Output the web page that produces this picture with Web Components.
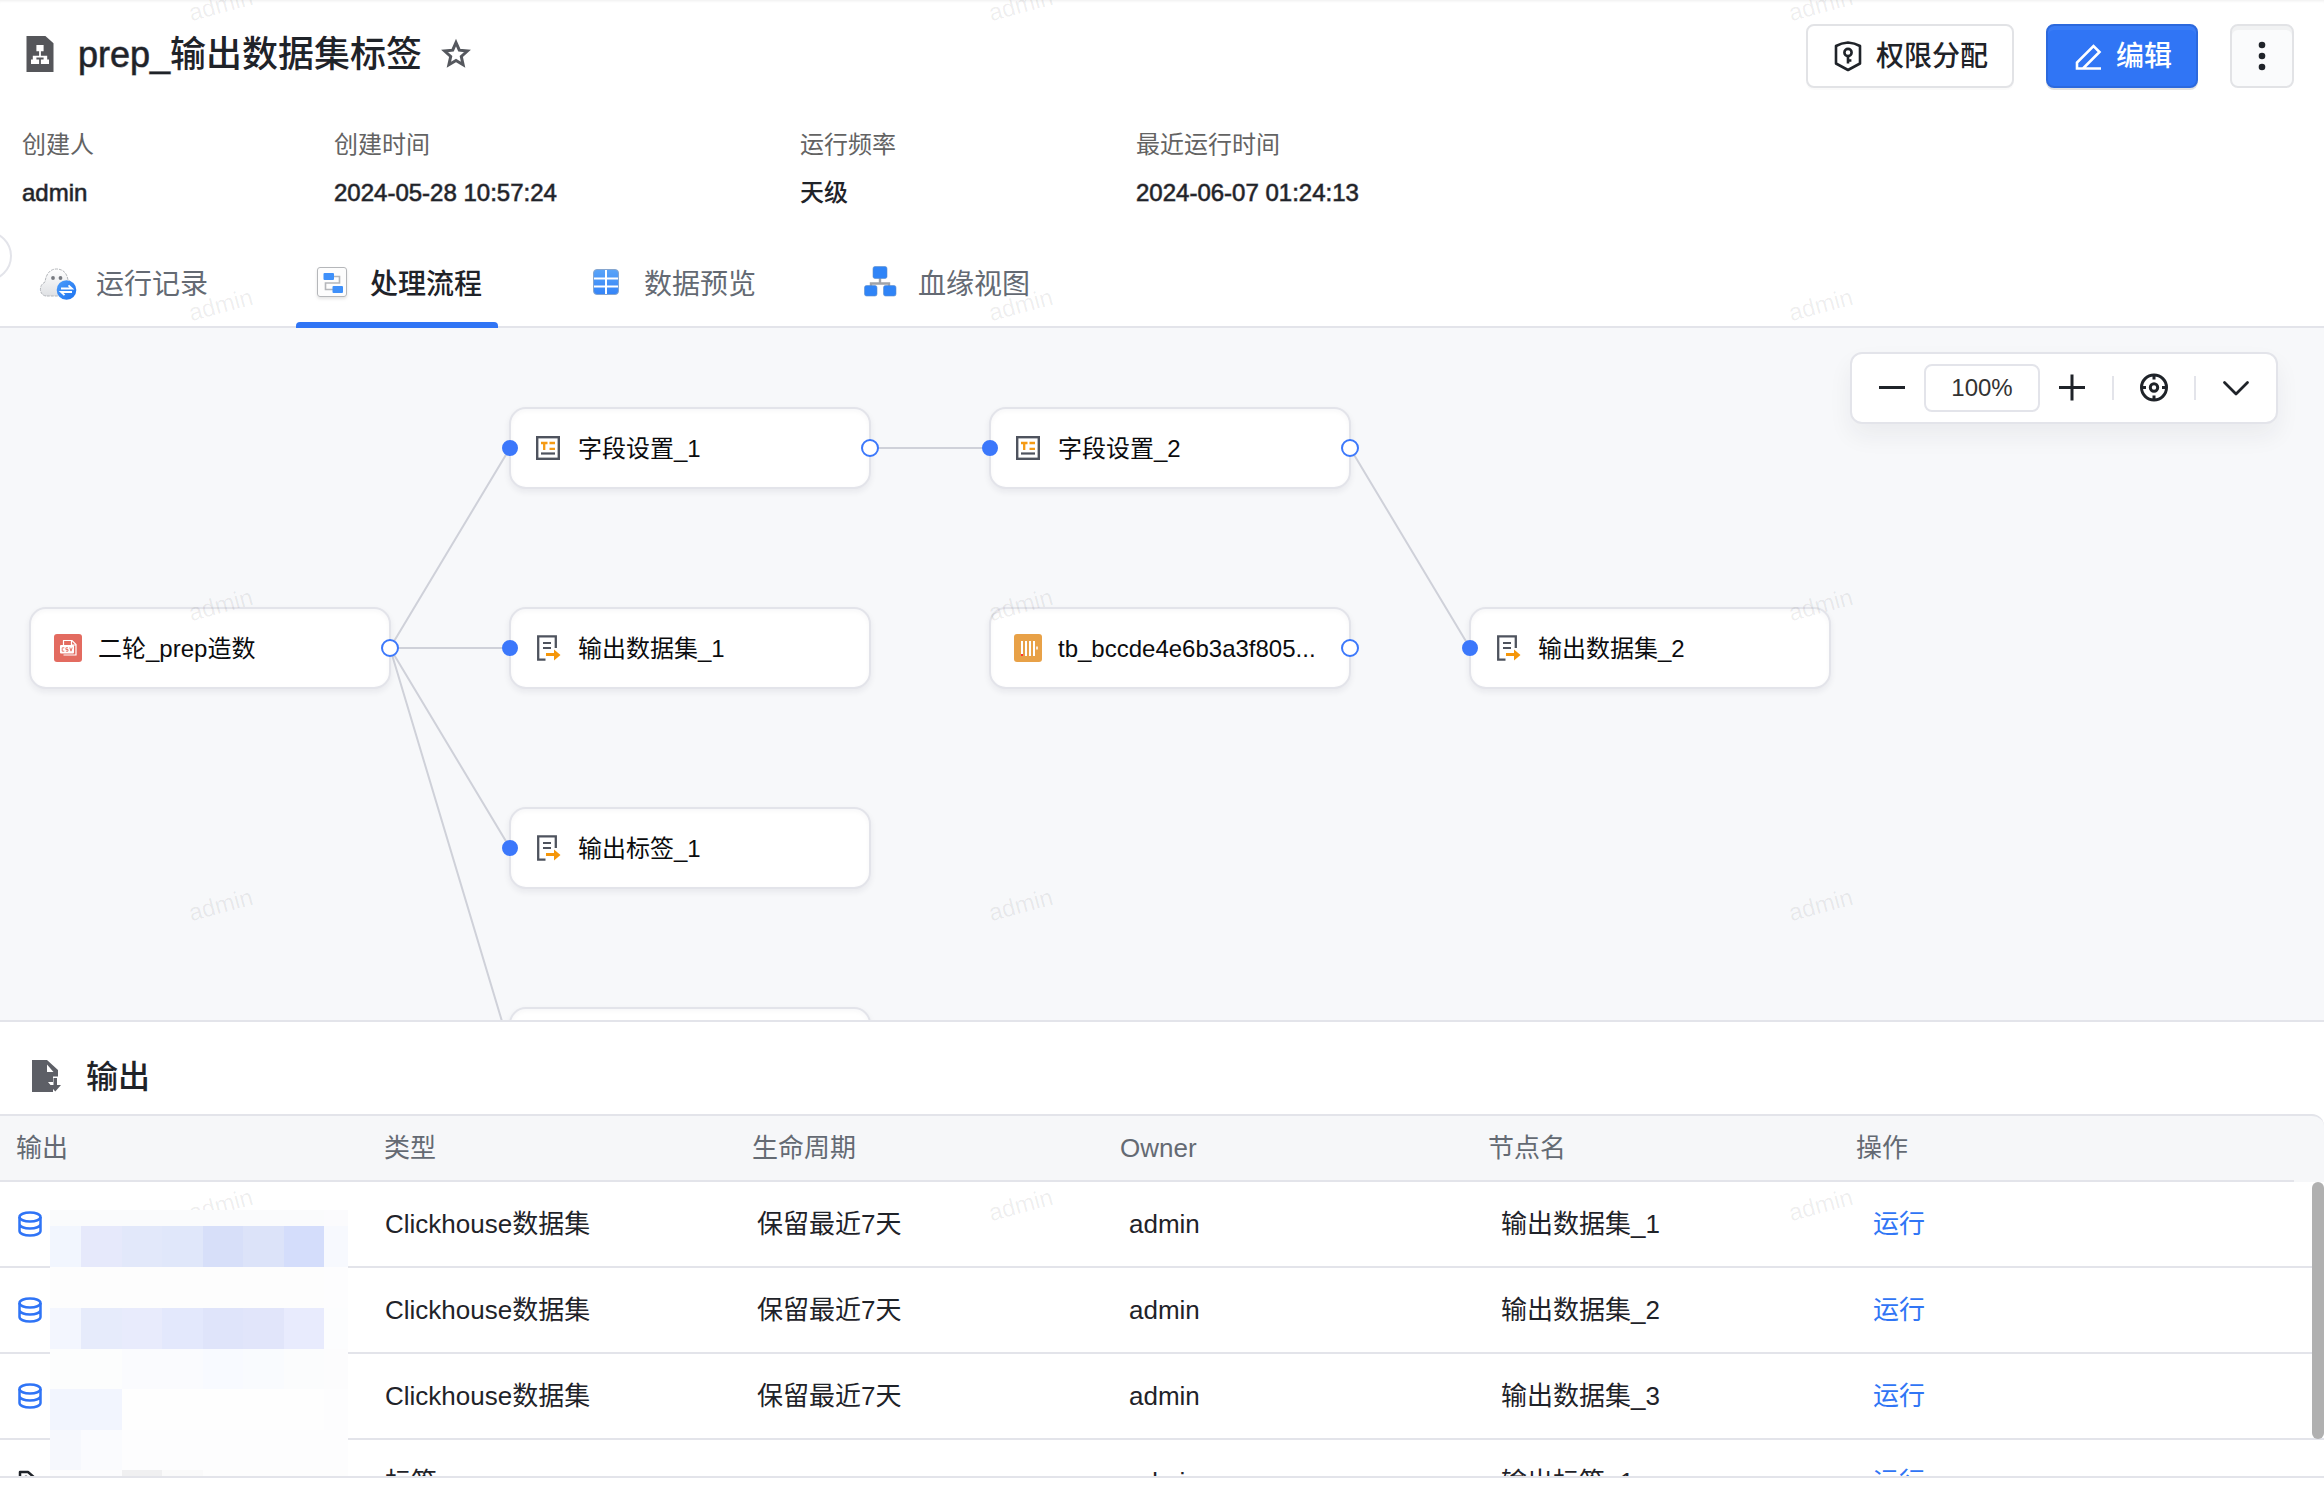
<!DOCTYPE html>
<html lang="zh-CN">
<head>
<meta charset="utf-8">
<title>prep_输出数据集标签</title>
<style>
  html, body { margin: 0; height: 100%; }
  body {
    --ink: #1f2329; --muted: #646a73; --line: #e3e4ea; --blue: #3075f5;
    --port: #3c78fb; --canvas: #f7f8fa; --medium: 1px rgba(31,35,41,.6);
    background: #fff; color: var(--ink);
    font-family: "Liberation Sans", "Noto Sans CJK SC", sans-serif;
    overflow: hidden;
  }
</style>
</head>
<body>
<prep-page></prep-page>

<script>
const define = (name, html, setup) => {
  const tpl = document.createElement('template');
  tpl.innerHTML = html;
  customElements.define(name, class extends HTMLElement {
    connectedCallback() {
      if (this.shadowRoot) return;
      this.attachShadow({ mode: 'open' }).append(tpl.content.cloneNode(true));
      if (setup) setup(this, this.shadowRoot);
    }
  });
};

const ICONS = {
  flowfile: ['0 0 32 40', `<path d="M1 0H22L31 8V40H1Z" fill="#55565a"/><path d="M12 10h8v7h-3v5h7v4h2v5h-9v-5h3v-2h-8v2h3v5H6v-5h2v-4h7v-5h-3z" fill="#fff"/>`],
  star: ['0 0 28 28', `<path d="M14 2.6l3.3 7.6 8.1.8-6.100 5.500 1.800 8.200-7.100-4.300-7.100 4.300 1.800-8.200L2.600 11l8.100-.8z" fill="none" stroke="#55585e" stroke-width="3" stroke-linejoin="miter"/>`],
  shield: ['0 0 32 32', `<path d="M16 2.500c4 .3 8.500 1.500 12 3.500v17.500L16 30 4 23.500V6c3.500-2 8-3.200 12-3.500z" fill="none" stroke="#1f2329" stroke-width="2.600" stroke-linejoin="round"/><circle cx="16" cy="12.500" r="3.600" fill="none" stroke="#1f2329" stroke-width="2.600"/><path d="M16 16v7.500M16 20.500h3.400" stroke="#1f2329" stroke-width="2.600" fill="none"/>`],
  pen: ['0 0 32 32', `<path d="M5 28.500V22.500L21.500 6l6 6L11 28.500M3.700 28.500H29" fill="none" stroke="#fff" stroke-width="2.600"/>`],
  more: ['0 0 32 32', `<g fill="#1f2329"><circle cx="16" cy="5" r="3.300"/><circle cx="16" cy="16" r="3.300"/><circle cx="16" cy="27" r="3.300"/></g>`],
  minus: ['0 0 32 32', `<path d="M3 15.500h26" stroke="#1f2329" stroke-width="3"/>`],
  plus: ['0 0 32 32', `<path d="M3 15.500h26M16 2.500v26" stroke="#1f2329" stroke-width="3"/>`],
  target: ['0 0 32 32', `<g fill="none" stroke="#1f2329" stroke-width="3"><circle cx="16" cy="15.500" r="12.500"/><circle cx="16" cy="15.500" r="3.700"/><path d="M16 3v4.500M16 23.500V28M3.500 15.500H8M24 15.500h4.500"/></g>`],
  chevron: ['0 0 32 32', `<path d="M4.500 10.500L16 22 27.500 10.500" fill="none" stroke="#1f2329" stroke-width="2.800" stroke-linecap="round" stroke-linejoin="round"/>`],
  ghost: ['0 0 40 40', `<defs><linearGradient id="g" x1="0" y1="0" x2="0" y2="1"><stop offset="0" stop-color="#fff"/><stop offset="1" stop-color="#dfe1e4"/></linearGradient><linearGradient id="b" x1="0" y1="0" x2="1" y2="1"><stop offset="0" stop-color="#4c9dfb"/><stop offset="1" stop-color="#1d72ef"/></linearGradient></defs><path d="M8 34C4 33.500 2 30 2.500 26c.5-3 2.500-5 4.500-6C8 12 12 7 18.500 7S29 11 30 18c4 2 5 5 4.500 8-1 5-4 8-8 8z" fill="url(#g)" stroke="#b4b7bb" stroke-dasharray="3 1"/><circle cx="15" cy="16" r="1.900" fill="#777a80"/><circle cx="22.500" cy="16" r="1.900" fill="#777a80"/><circle cx="28.500" cy="28" r="9.800" fill="url(#b)"/><path d="M23 26.500h11l-3.500-3.200M34 30h-11l3.500 3.200" fill="none" stroke="#fff" stroke-width="1.800"/>`],
  process: ['0 0 40 40', `<defs><filter id="s" x="-20%" y="-20%" width="140%" height="150%"><feDropShadow dx="0" dy="2" stdDeviation="1.500" flood-opacity=".1"/></filter></defs><g transform="translate(1 0)"><rect x="4.500" y="5.500" width="29" height="29" rx="2.500" fill="#fdfdfd" stroke="#b5b7ba" filter="url(#s)"/><path d="M20 14.500h6.500v6.500h-14v6.500H20" fill="none" stroke="#b4b6ba" stroke-width="1.600"/><rect x="10.500" y="11" width="10.500" height="7" rx="1" fill="#3f90fa"/><rect x="19.500" y="24" width="10.500" height="7" rx="1" fill="#3f90fa"/></g>`],
  grid: ['0 0 40 40', `<defs><linearGradient id="t" x1="0" y1="0" x2="0" y2="1"><stop offset="0" stop-color="#5aa4f8"/><stop offset="1" stop-color="#3484f8"/></linearGradient></defs><rect x="7.500" y="7.500" width="25" height="25" rx="3.500" fill="url(#t)" stroke="#86a6cf"/><path d="M20 8v24M8 16.500h24M8 24.500h24" stroke="#fff" stroke-width="2"/>`],
  lineage: ['0 0 40 40', `<path d="M20 16v6M11 25v-3.500h18V25" fill="none" stroke="#a0a3a8" stroke-width="2.400"/><g fill="#2f84f7" stroke="#5f8fcb" stroke-width=".6"><rect x="13" y="4.500" width="14" height="12" rx="2"/><rect x="4.500" y="23.500" width="12.500" height="10.500" rx="2"/><rect x="23.500" y="23.500" width="12.500" height="10.500" rx="2"/></g>`],
  csv: ['0 0 28 28', `<rect width="28" height="28" rx="3" fill="#e36b60"/><path d="M9.500 11V6.500h8.500l4 4V21H9.500" fill="none" stroke="#fff" stroke-width="1.200"/><path d="M17.500 6.500v4.500H22" fill="none" stroke="#fff" stroke-width="1.200"/><rect x="6" y="11" width="14" height="8.500" rx="1" fill="#fff"/><path d="M10.300 13.800H8.200v3.400h2.100M14 13.800h-2.100v1.700H14v1.700h-2.100M15.800 13.500l1.200 3.700 1.200-3.700" fill="none" stroke="#e36b60" stroke-width=".9"/>`],
  field: ['0 0 28 28', `<rect x="3.200" y="3.200" width="21.600" height="21.600" fill="#fff" stroke="#4e535e" stroke-width="2.400"/><path d="M7 9h6.500M10.200 9v7M15.500 9H21M15.500 14.800H21" fill="none" stroke="#f59a13" stroke-width="2.300"/><path d="M7 19.500h14" stroke="#4e535e" stroke-width="2.200"/>`],
  output: ['0 0 28 28', `<g transform="translate(-1 0)"><path d="M12.500 25.700H5.200V2.300h17.600V14" fill="none" stroke="#4e535e" stroke-width="2.300"/><path d="M10 9h8M10 14h8" stroke="#4e535e" stroke-width="2"/><path d="M13 19h8v-3.500L27.500 21 21 26.500V22h-8z" fill="#f5960a"/></g>`],
  tbl: ['0 0 28 28', `<rect width="28" height="28" rx="3" fill="#e8a147"/><path d="M8 7v15M12 7v15M16 7v15M20 7v15" stroke="#fff" stroke-width="2"/><path d="M23 12.500v3" stroke="#fff" stroke-width="1.600"/><path d="M8 20v2" stroke="#f33" stroke-width="2"/>`],
  outfile: ['0 0 32 32', `<path d="M2 0h15l11 10v6.500h-5V22h-5l5 6v4H2z" fill="#5d5f66"/><path d="M17 4.500V12h6.500z" fill="#fff"/><path d="M23.500 18h3.500v7h4l-5.700 6.500L19.500 25h4z" fill="#5d5f66"/>`],
  db: ['0 0 24 26', `<g fill="none" stroke="#2f74f6" stroke-width="2.500"><ellipse cx="12" cy="6" rx="10.500" ry="4.600"/><path d="M1.500 6v14c0 2.500 4.700 4.600 10.500 4.600s10.500-2.100 10.500-4.600V6M1.500 13c0 2.500 4.700 4.600 10.500 4.600s10.500-2.100 10.500-4.600"/></g>`],
  tag: ['0 0 24 26', `<path d="M2 14V3h8l12 10.500-9.500 10z" fill="none" stroke="#1f2329" stroke-width="2.500" stroke-linejoin="round"/><circle cx="8" cy="8.500" r="2" fill="#1f2329"/>`]
};

define('app-icon', `<style>
  :host { display: block; flex: none; width: 32px; height: 32px; }
  svg { display: block; width: 100%; height: 100%; overflow: visible; }
</style>`, (el, root) => {
  const [box, body] = ICONS[el.getAttribute('name')];
  root.innerHTML += `<svg viewBox="${box}" aria-hidden="true">${body}</svg>`;
});

define('ui-button', `<style>
  :host { display: block; }
  button {
    display: flex; align-items: center; justify-content: center; gap: 12px;
    box-sizing: border-box; height: 64px; padding: 0 24px; margin: 0;
    border: 2px solid #e2e3e6; border-radius: 8px; background: #fff;
    color: var(--ink); font: 500 28px/40px "Liberation Sans", "Noto Sans CJK SC", sans-serif;
    box-shadow: 0 2px 0 rgba(0,0,0,.02); white-space: nowrap; cursor: pointer;
  }
  ::slotted(span) { padding-top: 2px; }
  :host([kind="primary"]) button {
    background: var(--blue); border-color: #2c69dd; color: #fff;
    box-shadow: inset 0 4px 0 rgba(255,255,255,.05), 0 2px 0 #e2e2e2;
  }
  :host([kind="icon"]) button { width: 64px; padding: 0; background: #fafbfc; box-shadow: inset 0 4px 0 #f1f2f3; }
</style><button type="button"><slot></slot></button>`, (el, root) => {
  const label = el.getAttribute('label');
  if (label) root.querySelector('button').setAttribute('aria-label', label);
});

define('meta-item', `<style>
  :host { display: flex; flex-direction: column; gap: 12px; font-size: 24px; line-height: 36px; white-space: nowrap; }
  .label { color: #636363; }
  .value { font-weight: 500; }
  :host([latin]) .value { -webkit-text-stroke: var(--medium); }
</style><span class="label"><slot name="label"></slot></span><span class="value"><slot></slot></span>`);

define('tab-item', `<style>
  :host { display: block; position: relative; }
  button {
    display: flex; align-items: center; gap: 18px; box-sizing: border-box; height: 88px;
    margin: 0; padding: 0 16px; border: 0; background: none; color: var(--muted);
    font: 400 28px/40px "Liberation Sans", "Noto Sans CJK SC", sans-serif; white-space: nowrap; cursor: pointer;
  }
  app-icon { width: 40px; height: 40px; margin-bottom: 4px; }
  .text { padding-top: 2px; }
  :host([selected]) button { color: var(--ink); font-weight: 500; }
  :host([selected])::after {
    content: ""; position: absolute; left: 0; right: 0; bottom: 0; height: 6px;
    border-radius: 4px 4px 0 0; background: var(--blue);
  }
</style><button type="button" role="tab"><span class="text"><slot></slot></span></button>`, (el, root) => {
  const b = root.querySelector('button');
  b.setAttribute('aria-selected', el.hasAttribute('selected'));
  const icon = document.createElement('app-icon');
  icon.setAttribute('name', el.getAttribute('icon'));
  b.prepend(icon);
});

define('page-header', `<style>
  :host { display: block; position: relative; background: #fff; border-bottom: 2px solid var(--line); box-shadow: inset 0 3px 3px -2px rgba(0,0,0,.07); }
  .top { display: flex; align-items: center; justify-content: space-between; padding: 24px 30px 0 24px; }
  .title, .actions { display: flex; align-items: center; }
  .title { padding-bottom: 4px; }
  .actions { gap: 32px; }
  h1 { margin: 0 20px 0 22px; padding-top: 2px; font-size: 36px; line-height: 52px; font-weight: 500; white-space: nowrap; }
  h1 span { -webkit-text-stroke: var(--medium); }
  .doc { width: 32px; height: 36px; }
  .star { width: 28px; height: 28px; }
  .fav { display: block; border: 0; padding: 0; margin: 0; background: none; }
  .meta { display: grid; grid-template-columns: 312px 466px 336px auto; padding: 39px 22px 0; }
  .tabs { display: flex; gap: 72px; padding: 0 22px; margin: 29px 0 -2px; }
  .handle {
    position: absolute; left: -38px; top: 231px; width: 50px; height: 50px; padding: 0;
    box-sizing: border-box; border: 2px solid var(--line); border-radius: 50%; background: #fff;
  }
</style>
<div class="top">
  <div class="title">
    <app-icon class="doc" name="flowfile"></app-icon>
    <h1><span>prep_</span>输出数据集标签</h1>
    <button class="fav" type="button" aria-label="收藏"><app-icon class="star" name="star"></app-icon></button>
  </div>
  <div class="actions">
    <ui-button><app-icon name="shield"></app-icon><span>权限分配</span></ui-button>
    <ui-button kind="primary"><app-icon name="pen"></app-icon><span>编辑</span></ui-button>
    <ui-button kind="icon" label="更多"><app-icon name="more"></app-icon></ui-button>
  </div>
</div>
<div class="meta">
  <meta-item latin><span slot="label">创建人</span>admin</meta-item>
  <meta-item latin><span slot="label">创建时间</span>2024-05-28 10:57:24</meta-item>
  <meta-item><span slot="label">运行频率</span>天级</meta-item>
  <meta-item latin><span slot="label">最近运行时间</span>2024-06-07 01:24:13</meta-item>
</div>
<div class="tabs" role="tablist">
  <tab-item icon="ghost">运行记录</tab-item>
  <tab-item icon="process" selected>处理流程</tab-item>
  <tab-item icon="grid">数据预览</tab-item>
  <tab-item icon="lineage">血缘视图</tab-item>
</div>
<button class="handle" type="button" aria-label="展开"></button>`);

define('flow-node', `<style>
  :host {
    display: flex; align-items: center; gap: 16px; position: absolute; box-sizing: border-box;
    width: 362px; height: 82px; padding: 0 23px; border: 2px solid var(--line); border-radius: 17px;
    background: #fff; color: #0b0c0e; font-size: 24px; line-height: 36px; white-space: nowrap;
    box-shadow: 0 3px 6px rgba(30,35,50,.07), inset 0 2px 5px rgba(30,35,50,.035);
  }
  app-icon { width: 28px; height: 28px; }
  .text { padding-top: 2px; }
  i { position: absolute; top: 30px; box-sizing: border-box; width: 18px; height: 18px; border-radius: 50%; border: 2px solid var(--port); background: #fff; }
  .in { left: -9px; top: 31px; width: 16px; height: 16px; background: var(--port); }
  .out { right: -10px; }
</style><span class="text"><slot></slot></span>`, (el, root) => {
  el.style.left = el.getAttribute('x') + 'px';
  el.style.top = el.getAttribute('y') + 'px';
  if (el.getAttribute('icon')) {
    const icon = document.createElement('app-icon');
    icon.setAttribute('name', el.getAttribute('icon'));
    root.insertBefore(icon, root.querySelector('.text'));
  }
  for (const side of (el.getAttribute('ports') || '').split(' ').filter(Boolean)) {
    const p = document.createElement('i');
    p.className = side;
    root.append(p);
  }
});

define('zoom-bar', `<style>
  :host {
    display: flex; align-items: center; box-sizing: border-box; height: 72px; padding: 0 24px;
    border: 2px solid var(--line); border-radius: 12px; background: #fff;
    box-shadow: 0 12px 24px rgba(30,35,50,.06);
  }
  button { display: block; padding: 0; margin: 0; border: 0; background: none; }
  input {
    box-sizing: border-box; width: 116px; height: 48px; margin: 0 16px; padding: 0; text-align: center;
    border: 2px solid var(--line); border-radius: 8px; background: #fff; color: #333;
    font: 24px/32px "Liberation Sans", sans-serif;
  }
  hr { width: 2px; height: 24px; margin: 0 24px; border: 0; background: var(--line); }
</style>
<button type="button" aria-label="缩小"><app-icon name="minus"></app-icon></button>
<input type="text" aria-label="缩放比例" value="100%">
<button type="button" aria-label="放大"><app-icon name="plus"></app-icon></button>
<hr>
<button type="button" aria-label="定位"><app-icon name="target"></app-icon></button>
<hr>
<button type="button" aria-label="收起"><app-icon name="chevron"></app-icon></button>`);

define('flow-canvas', `<style>
  :host { display: block; position: relative; flex: 1; min-height: 0; overflow: hidden; background: var(--canvas); }
  svg { position: absolute; left: 0; top: 0; width: 100%; height: 100%; }
  zoom-bar { position: absolute; right: 46px; top: 24px; }
</style>
<svg aria-hidden="true"><g stroke="#cfd1d9" stroke-width="2" fill="none">
  <path d="M390 320L510 120M390 320H510M390 320L510 520M390 320L510 720M870 120H990M1350 120L1470 320"/>
</g></svg>
<flow-node x="29" y="279" icon="csv" ports="out">二轮_prep造数</flow-node>
<flow-node x="509" y="79" icon="field" ports="in out">字段设置_1</flow-node>
<flow-node x="989" y="79" icon="field" ports="in out">字段设置_2</flow-node>
<flow-node x="509" y="279" icon="output" ports="in">输出数据集_1</flow-node>
<flow-node x="989" y="279" icon="tbl" ports="out">tb_bccde4e6b3a3f805...</flow-node>
<flow-node x="1469" y="279" icon="output" ports="in">输出数据集_2</flow-node>
<flow-node x="509" y="479" icon="output" ports="in">输出标签_1</flow-node>
<flow-node x="509" y="679" ports="in"></flow-node>
<zoom-bar></zoom-bar>`);

define('pixel-mask', `<style>
  :host {
    display: grid; overflow: hidden;
    grid-template-columns: 31px 41px 40px 41px 40px 41px 40px 24px;
    grid-template-rows: 16px 41px 41px 41px 40px 41px 40px 6px;
  }
</style>`, (el, root) => {
  const rows = [
    'fafbfc fafbfc fafbfc fafbfc fafbfc fafbfc fafbfc fbfbfd',
    'f2f6fe e6e9fb e2e8fa e0e7fa d7dff9 dce3f9 d4ddfb f7f9fe',
    'fdfdfd fdfdfd fdfdfd fdfdfd fdfdfd fdfdfd fdfdfd fdfdfe',
    'f3f6fe e6ebfb e8ebfc e3e8fc dfe4fa e1e5fa e8ebfd fcfdfe',
    'fcfdfd fcfdfd fafbfe fafbfe f8faff f9fbfe fbfcfd fcfcfd',
    'f2f5fe f2f5fe fefefe fefefe fefefe fefefe fefefe fdfdfe',
    'f6f8fd fafbfe fdfdfe fdfdfe fdfdfe fdfdfe fdfdfe fdfdfe',
    'fcfcfd fcfcfd f0f0f1 fafafa fdfdfd fdfdfd fdfdfd fdfdfd'];
  for (const c of rows.join(' ').split(' ')) {
    const b = document.createElement('div');
    b.style.background = '#' + c;
    root.append(b);
  }
});

define('output-panel', `<style>
  :host { display: block; flex: none; background: #fff; border-top: 2px solid var(--line); padding-bottom: 10px; }
  header { display: flex; align-items: center; gap: 24px; height: 92px; padding: 16px 30px 0; box-sizing: border-box; }
  h2 { margin: 0; padding-top: 2px; font-size: 32px; line-height: 48px; font-weight: 500; }
  .head { border-top: 2px solid var(--line); border-radius: 0 12px 0 0; background: #f6f7f9; padding-right: 30px; }
  table { width: 100%; border-collapse: separate; border-spacing: 0; table-layout: fixed; font-size: 26px; line-height: 40px; }
  th, td { box-sizing: border-box; padding: 0; border-bottom: 2px solid var(--line); text-align: left; font-weight: 400; white-space: nowrap; }
  th { height: 66px; padding-left: 16px; color: var(--muted); }
  td { height: 86px; padding-left: 13px; }
  .head col { width: 368px; }
  .body col { width: 372px; }
  .head col:last-child, .body col:last-child { width: auto; }
  .body { position: relative; height: 294px; overflow: hidden; border-bottom: 2px solid var(--line); }
  td app-icon { width: 24px; height: 26px; margin-left: 5px; }
  a { color: var(--blue); text-decoration: none; }
  .thumb { position: absolute; right: 0; top: 0; width: 12px; height: 257px; border-radius: 6px; background: #b0b0b0; }
  pixel-mask { position: absolute; left: 50px; top: 28px; z-index: 3; }
</style>
<header><app-icon name="outfile"></app-icon><h2>输出</h2></header>
<div class="head"><table>
  <colgroup><col><col><col><col><col><col></colgroup>
  <thead><tr><th>输出</th><th>类型</th><th>生命周期</th><th>Owner</th><th>节点名</th><th>操作</th></tr></thead>
</table></div>
<div class="body"><table>
  <colgroup><col><col><col><col><col><col></colgroup>
  <tbody></tbody>
</table>
<pixel-mask></pixel-mask>
<div class="thumb"></div></div>`, (el, root) => {
  root.querySelector('tbody').innerHTML = [
    ['db', 'Clickhouse数据集', '保留最近7天', 'admin', '输出数据集_1'],
    ['db', 'Clickhouse数据集', '保留最近7天', 'admin', '输出数据集_2'],
    ['db', 'Clickhouse数据集', '保留最近7天', 'admin', '输出数据集_3'],
    ['tag', '标签', '', 'admin', '输出标签_1']
  ].map(([icon, ...cells]) =>
    `<tr><td><app-icon name="${icon}"></app-icon></td>${cells.map(c => `<td>${c}</td>`).join('')}<td><a href="#run">运行</a></td></tr>`
  ).join('');
});

define('water-mark', `<style>
  :host {
    display: grid; position: absolute; left: 0; right: 0; top: -145px; z-index: 2; pointer-events: none;
    grid-template-columns: repeat(3, 800px); grid-auto-rows: 300px; align-items: center;
    padding-left: 188px; color: rgba(0,0,0,.07); font-size: 24px; line-height: 32px;
  }
  span { justify-self: start; transform: rotate(-15deg); }
</style>`, (el, root) => {
  for (let i = 0; i < 15; i++) {
    const s = document.createElement('span');
    s.textContent = el.getAttribute('text');
    root.append(s);
  }
});

define('prep-page', `<style>
  :host { display: flex; flex-direction: column; position: relative; height: 100vh; overflow: hidden; }
</style>
<page-header></page-header>
<flow-canvas></flow-canvas>
<output-panel></output-panel>
<water-mark text="admin"></water-mark>`);
</script>
</body>
</html>
